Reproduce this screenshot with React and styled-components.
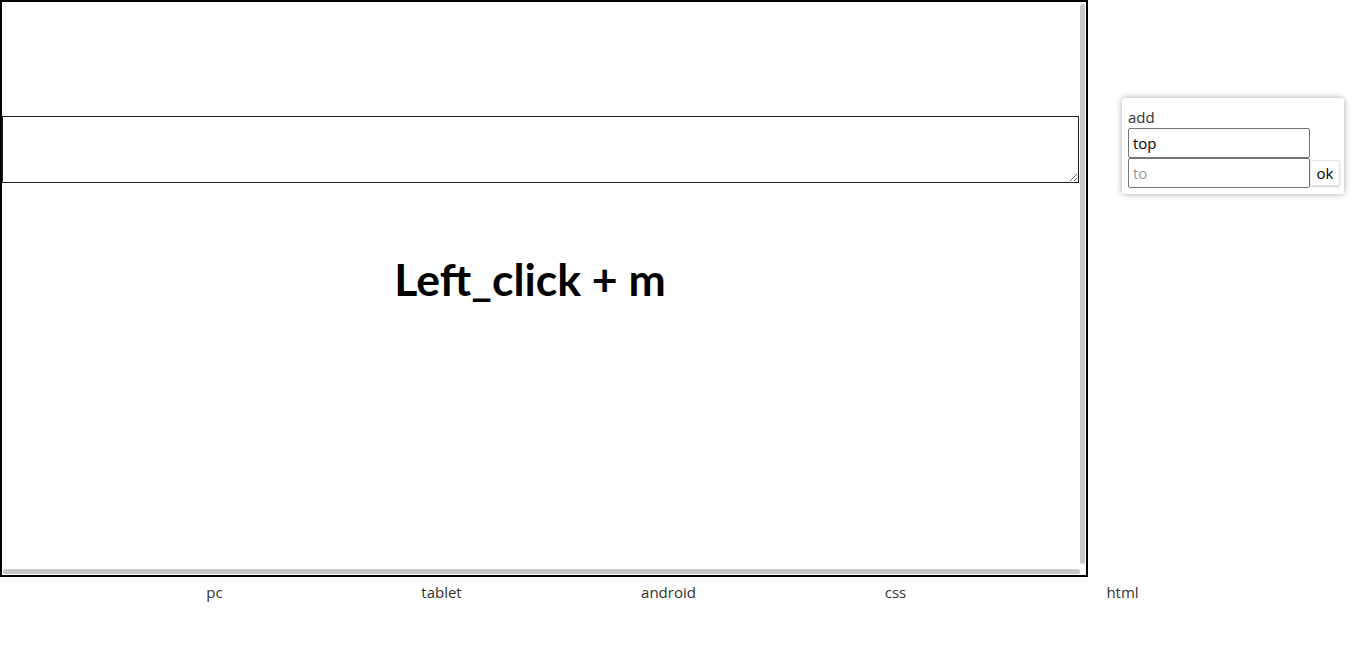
import React from 'react'
import styled, { createGlobalStyle } from 'styled-components'

const Global = createGlobalStyle`
  body {
    margin: 0;
    background: #fff;
    font-family: 'Open Sans', 'Noto Sans', sans-serif;
    color: #333;
  }
`
const Top = styled.div`
  display: flex;
  align-items: flex-start;
`
const Frame = styled.div`
  box-sizing: border-box;
  width: 1088px;
  height: 577px;
  border: 2px solid #000;
  display: grid;
  grid-template-columns: 1fr 6px;
  grid-template-rows: 1fr 7px;
  overflow: hidden;
`
const Canvas = styled.div`
  padding-top: 114px;
  overflow: hidden;
`
const VBar = styled.div`
  padding: 2px 1px 4px 0;
  display: flex;
`
const HBar = styled.div`
  padding: 1px 0 1px 1px;
  display: flex;
`
const Thumb = styled.div`
  flex: 1;
  background: #c8c8c8;
  border-radius: 3px;
`
const Editor = styled.textarea`
  display: block;
  box-sizing: border-box;
  width: 1077px;
  height: 67px;
  margin: 0;
  border: 1px solid #222;
  font-family: 'Open Sans', sans-serif;
`
const Hint = styled.h1`
  margin: 66px 22px 0 0;
  text-align: center;
  font-family: Lato, 'Open Sans', sans-serif;
  font-size: 44.5px;
  line-height: 60px;
  font-weight: 700;
  color: #000;
`
const Panel = styled.div`
  box-sizing: border-box;
  width: 222px;
  margin: 98px 0 0 34px;
  padding: 8px 4px 6px 6px;
  background: #fff;
  border-radius: 3px;
  box-shadow: 0 0 6px rgba(0, 0, 0, 0.35);
`
const Label = styled.div`
  font-size: 15px;
  line-height: 22px;
  color: #333;
`
const Row = styled.div`
  display: flex;
  align-items: center;
`
const Field = styled.input`
  box-sizing: border-box;
  width: 182px;
  height: 30px;
  margin: 0;
  padding: 0 4px;
  border: 1px solid #767676;
  border-radius: 2px;
  font-family: 'Open Sans', sans-serif;
  font-size: 15px;
  color: #000;

  &::placeholder {
    color: #999;
  }
`
const Ok = styled.button`
  box-sizing: border-box;
  width: 30px;
  height: 26px;
  margin: 0;
  padding: 0;
  background: #fff;
  border: 1px solid #e2e2e2;
  border-radius: 2px;
  box-shadow: 0 1px 2px rgba(0, 0, 0, 0.2);
  font-family: 'Open Sans', sans-serif;
  font-size: 15px;
  color: #000;
`
const Tabs = styled.div`
  display: grid;
  grid-template-columns: repeat(5, 227px);
  padding-left: 101px;
  margin-top: 5px;
`
const Tab = styled.div`
  text-align: center;
  font-size: 15px;
  line-height: 20px;
  color: #333;
`

const tabs = ['pc', 'tablet', 'android', 'css', 'html']

const App = () => (
  <>
    <Global />
    <Top>
      <Frame>
        <Canvas>
          <Editor />
          <Hint>Left_click + m</Hint>
        </Canvas>
        <VBar>
          <Thumb />
        </VBar>
        <HBar>
          <Thumb />
        </HBar>
      </Frame>
      <Panel>
        <Label>add</Label>
        <Field defaultValue="top" />
        <Row>
          <Field placeholder="to" />
          <Ok>ok</Ok>
        </Row>
      </Panel>
    </Top>
    <Tabs>
      {tabs.map(t => (
        <Tab key={t}>{t}</Tab>
      ))}
    </Tabs>
  </>
)

export default App
